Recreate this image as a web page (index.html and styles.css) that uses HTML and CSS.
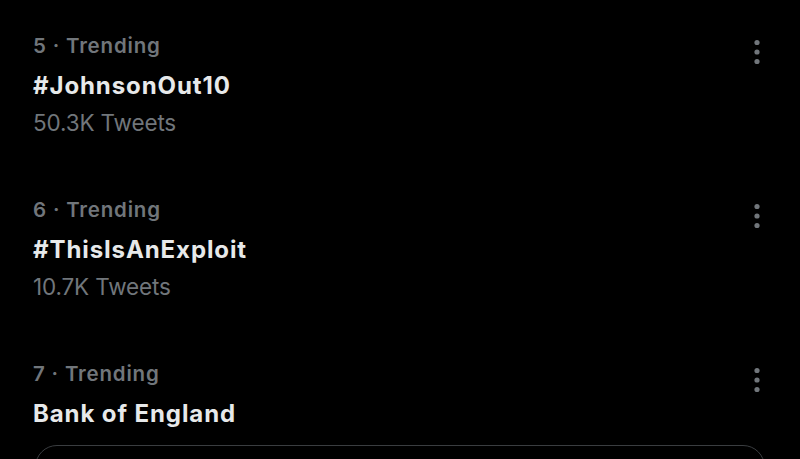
FILE: index.html
```html
<!DOCTYPE html>
<html lang="en">
<head>
<meta charset="utf-8">
<link rel="stylesheet" href="styles.css">
<title>Trends</title>
</head>
<body>
<main class="trends">
  <section class="trend">
    <div class="trend-body">
      <div class="trend-meta">5 · Trending</div>
      <div class="trend-name">#JohnsonOut10</div>
      <div class="trend-count">50.3K Tweets</div>
    </div>
    <button class="more" aria-label="More">
      <svg viewBox="0 0 10 26" width="10" height="26"><circle cx="5" cy="3.5" r="2.6"/><circle cx="5" cy="13" r="2.6"/><circle cx="5" cy="22.5" r="2.6"/></svg>
    </button>
  </section>
  <section class="trend">
    <div class="trend-body">
      <div class="trend-meta">6 · Trending</div>
      <div class="trend-name">#ThisIsAnExploit</div>
      <div class="trend-count">10.7K Tweets</div>
    </div>
    <button class="more" aria-label="More">
      <svg viewBox="0 0 10 26" width="10" height="26"><circle cx="5" cy="3.5" r="2.6"/><circle cx="5" cy="13" r="2.6"/><circle cx="5" cy="22.5" r="2.6"/></svg>
    </button>
  </section>
  <section class="trend trend-last">
    <div class="trend-body">
      <div class="trend-meta">7 · Trending</div>
      <div class="trend-name">Bank of England</div>
    </div>
    <button class="more" aria-label="More">
      <svg viewBox="0 0 10 26" width="10" height="26"><circle cx="5" cy="3.5" r="2.6"/><circle cx="5" cy="13" r="2.6"/><circle cx="5" cy="22.5" r="2.6"/></svg>
    </button>
  </section>
  <div class="card"></div>
</main>
</body>
</html>
```

FILE: styles.css
```css
html, body {
  margin: 0;
  padding: 0;
  background: #000;
  height: 100%;
  overflow: hidden;
}
body {
  font-family: Inter, "Liberation Sans", sans-serif;
  color: #e7e9ea;
}
.trends {
  display: flex;
  flex-direction: column;
}
.trend {
  display: flex;
  justify-content: space-between;
  align-items: flex-start;
  height: 164px;
  box-sizing: border-box;
  padding: 34px 38px 0 33px;
}
.trend-last {
  height: auto;
}
.trend-body {
  display: flex;
  flex-direction: column;
}
.trend-meta {
  font-size: 20.5px;
  line-height: 24px;
  letter-spacing: 0.8px;
  color: #71767b;
  font-weight: 600;
}
.trend-name {
  margin-top: 13px;
  font-size: 24px;
  line-height: 30px;
  letter-spacing: 0.9px;
  font-weight: 700;
  color: #e7e9ea;
}
.trend-count {
  margin-top: 8px;
  font-size: 22.5px;
  line-height: 28px;
  letter-spacing: -0.15px;
  color: #71767b;
}
.more {
  background: none;
  border: 0;
  padding: 0;
  margin-top: 5px;
  display: flex;
}
.more svg {
  fill: #71767b;
}
.card {
  margin: 16px 35px 0 35px;
  height: 80px;
  border: 1px solid #3a3d40;
  border-radius: 22px;
}
```
